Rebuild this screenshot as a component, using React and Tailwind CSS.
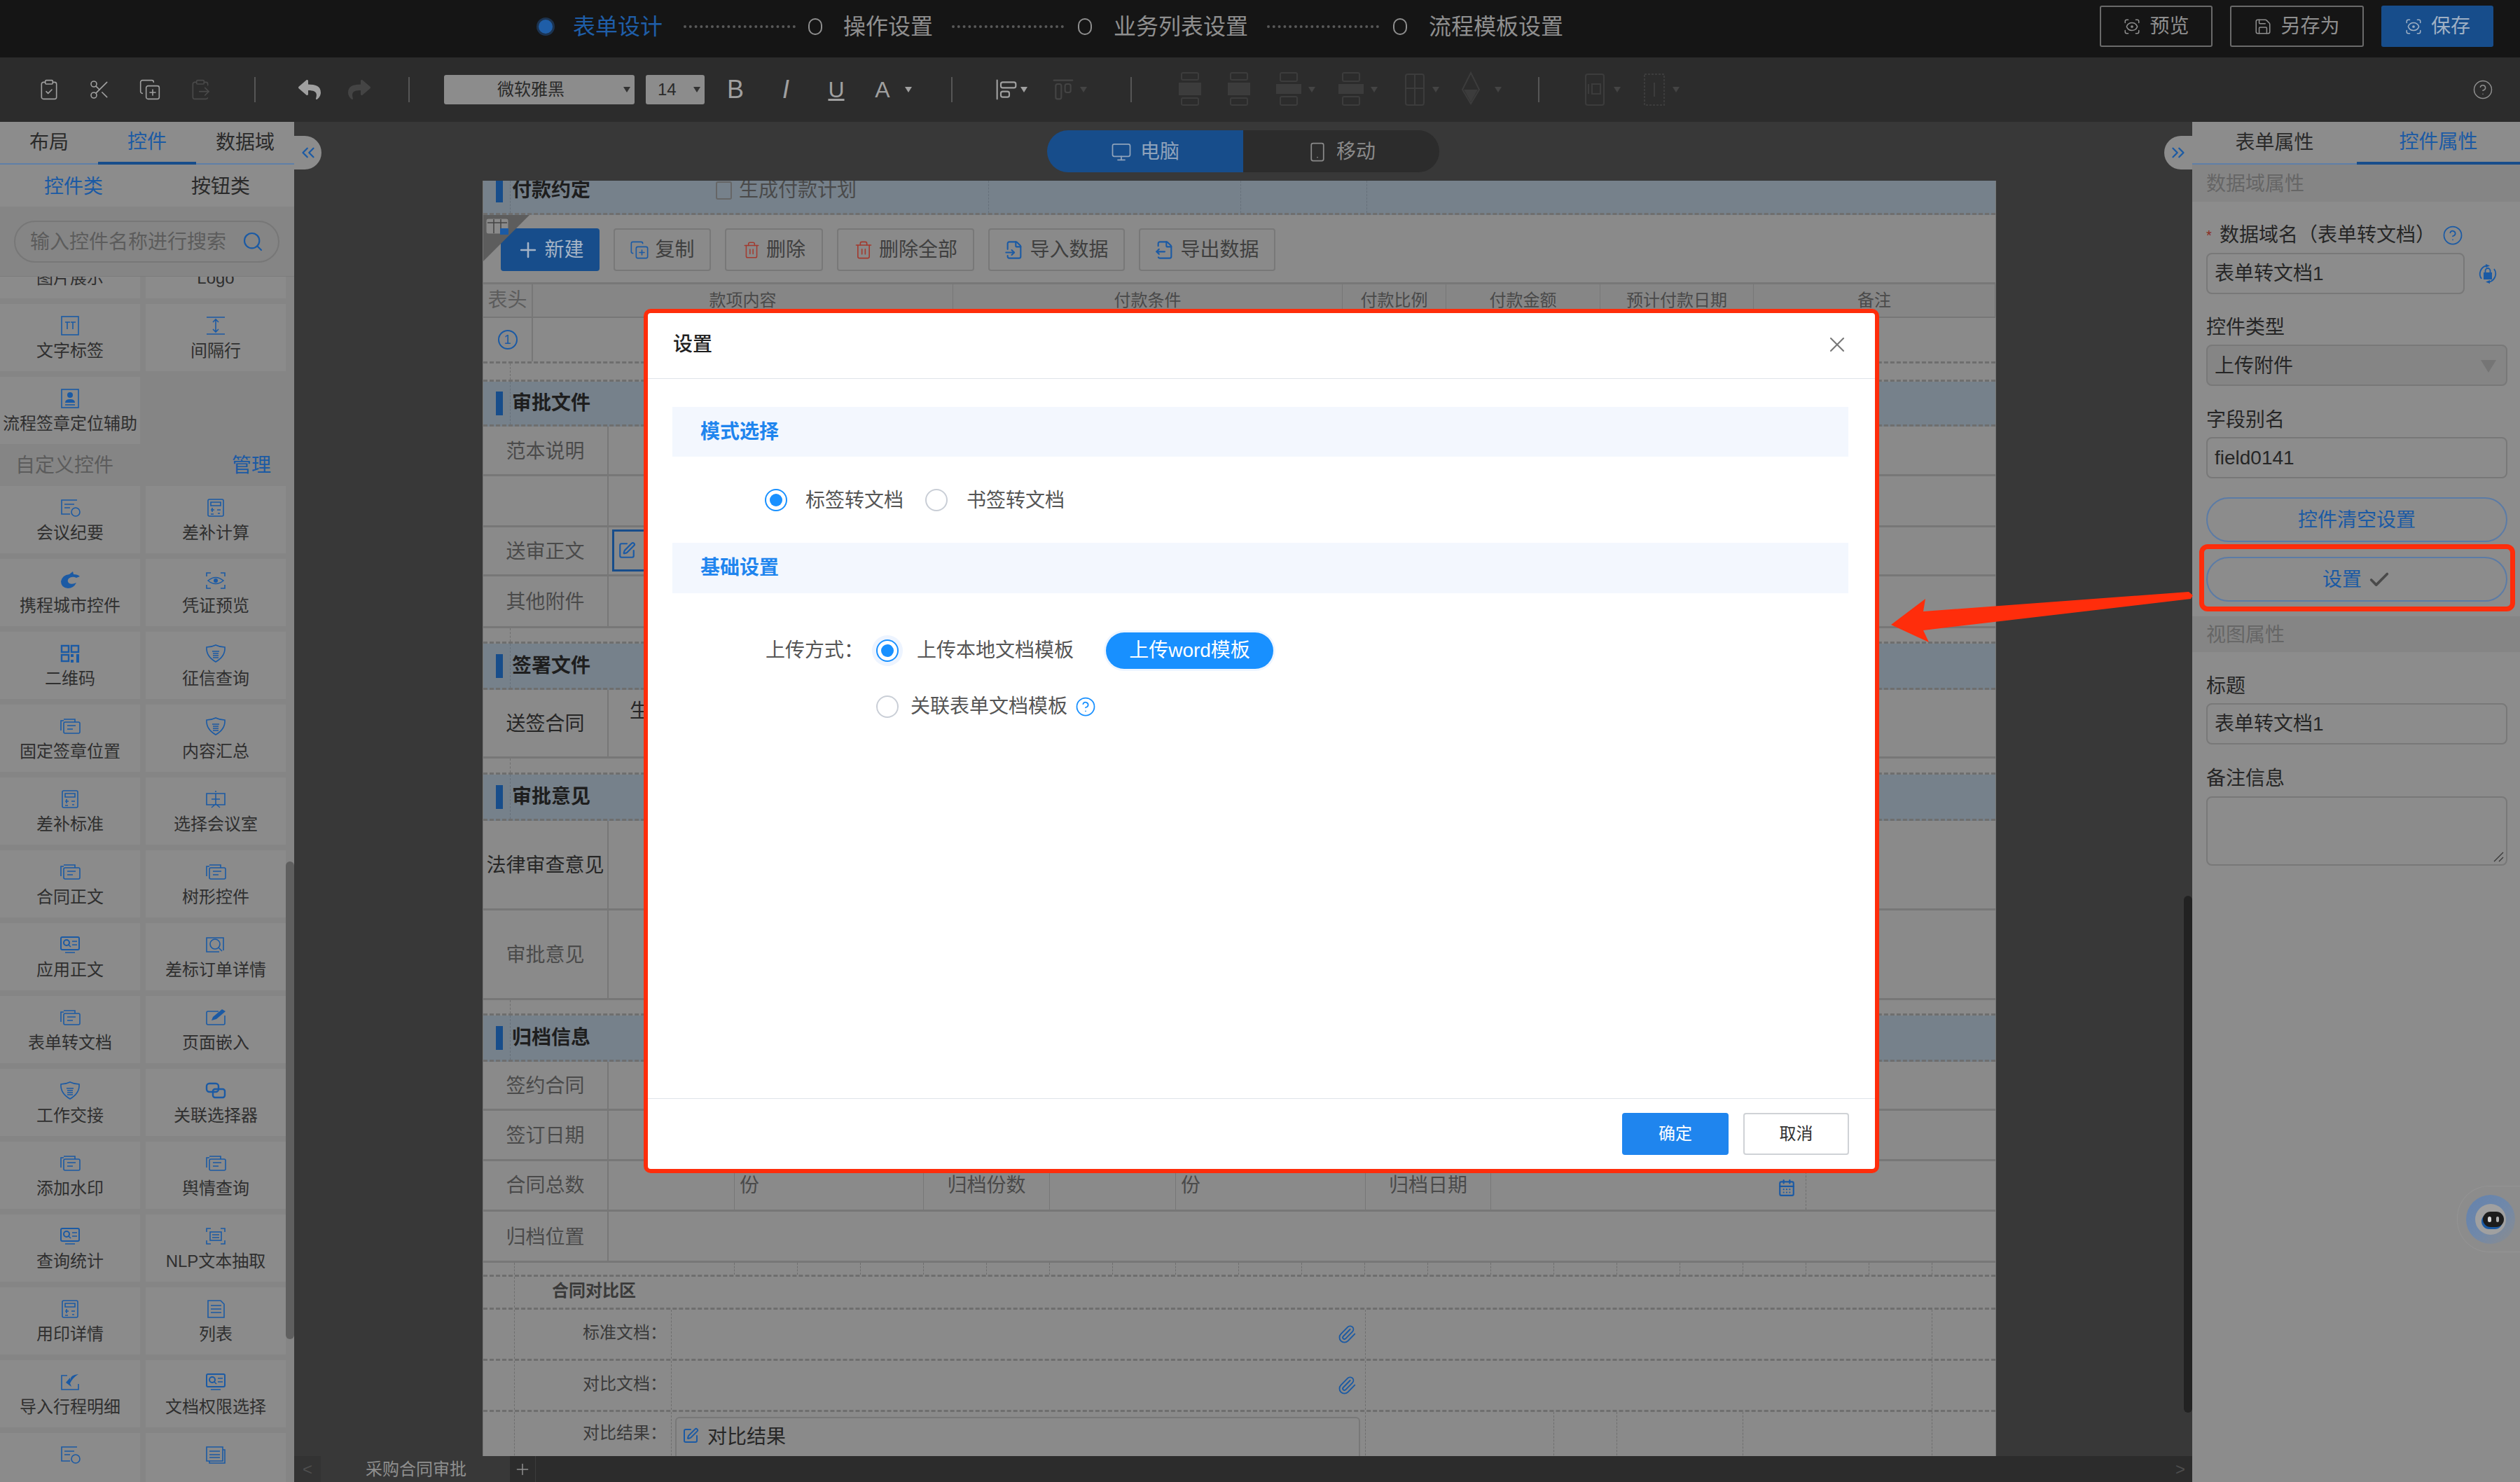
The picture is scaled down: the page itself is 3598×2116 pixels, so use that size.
// App.jsx
import React from "react";
import {
  Check, ChevronsLeft, ChevronsRight, CircleHelp, ClipboardCheck, ClipboardPaste, CopyPlus,
  Monitor, Paperclip, Plus, Scissors, ScanEye, Search, Smartphone, SquarePen, Trash2, X,
  CalendarDays, FileInput, FileOutput, Save, AlignStartVertical, AlignStartHorizontal,
} from "lucide-react";
import { FaReply, FaShare } from "react-icons/fa";

const BLUE = "#1b5aa4";
const DIM = "#3c3c3c";

/* left panel glyphs, all in a 32x28 box */
const WidgetIcon = ({ type }) => {
  const s = { fill: "none", stroke: BLUE, strokeWidth: 1.6 };
  let body = null;
  if (type === "stack") {
    body = (
      <>
        <path d="M3 20V6h4" {...s} />
        <rect x="7" y="8" width="23" height="16" rx="2" {...s} />
        <path d="M7 4h16v4M12 13h12M12 18h8" {...s} />
      </>
    );
  } else if (type === "calc") {
    body = (
      <>
        <rect x="5" y="2" width="22" height="24" rx="2" {...s} />
        <path d="M9 6h14v5H9zM9 17h5M18 17h5M11 14v6M9 23h4M19 22h3" {...s} />
      </>
    );
  } else if (type === "shield") {
    body = (
      <>
        <path d="M3 5q7 0 13-3q6 3 13 3q1 13-13 21Q2 18 3 5z" {...s} />
        <path d="M11 11h10M12 14h8M12 17h8M12 20h8v-0" {...s} strokeWidth="1.3" />
      </>
    );
  } else if (type === "card") {
    body = (
      <>
        <rect x="3" y="3" width="26" height="18" rx="2" {...s} strokeWidth="2" />
        <circle cx="11" cy="11" r="4" {...s} strokeWidth="2" />
        <path d="M14 14l3 3M19 9h7M19 14h7M9 25h14" {...s} />
      </>
    );
  } else if (type === "scan") {
    body = (
      <>
        <path d="M3 8V3h6M23 3h6v5M3 20v5h6M29 20v5h-6" {...s} />
        <path d="M5 14q11-9 22 0q-11 9-22 0z" {...s} />
        <circle cx="16" cy="14" r="3" fill={BLUE} />
      </>
    );
  } else if (type === "ocr") {
    body = (
      <>
        <path d="M3 8V3h6M23 3h6v5M3 20v5h6M29 20v5h-6" {...s} />
        <rect x="8" y="8" width="16" height="12" {...s} />
        <path d="M11 12h10M11 16h10" {...s} />
      </>
    );
  } else if (type === "qr") {
    body = (
      <>
        <rect x="4" y="3" width="10" height="9" {...s} strokeWidth="2.4" />
        <rect x="18" y="3" width="10" height="9" {...s} strokeWidth="2.4" />
        <rect x="4" y="16" width="10" height="9" {...s} strokeWidth="2.4" />
        <path d="M17 15h4v4h-4zM25 15h4v12h-4zM17 23h4v4h-4z" fill={BLUE} />
      </>
    );
  } else if (type === "screen") {
    body = (
      <>
        <path d="M16 2v2M3 6h26v16H3zM16 6v16M10 26l6-5l6 5M10 14h12" {...s} />
      </>
    );
  } else if (type === "find") {
    body = (
      <>
        <path d="M27 22V4H3v20h18" {...s} />
        <circle cx="15" cy="13" r="7" {...s} />
        <path d="M20 18l5 5" {...s} />
      </>
    );
  } else if (type === "edit") {
    body = (
      <>
        <path d="M20 5H5a2 2 0 0 0-2 2v15a2 2 0 0 0 2 2h22a2 2 0 0 0 2-2V11" {...s} />
        <path d="M10 18l2-5L25 2l5 3L17 16z" fill={BLUE} />
      </>
    );
  } else if (type === "link") {
    body = (
      <>
        <rect x="3" y="4" width="17" height="12" rx="4" {...s} strokeWidth="2.4" />
        <rect x="12" y="12" width="17" height="12" rx="3" {...s} strokeWidth="2.4" />
      </>
    );
  } else if (type === "list") {
    body = (
      <>
        <path d="M5 2h18l5 5v19H5z" {...s} />
        <path d="M9 9h15M9 14h15M9 19h15" {...s} />
      </>
    );
  } else if (type === "import") {
    body = (
      <>
        <path d="M12 5H4v20h24v-8" {...s} />
        <path d="M28 3q-12 1-12 9V8l-6 7l8 6l-2-5q4-8 12-13z" fill={BLUE} />
      </>
    );
  } else if (type === "ctrip") {
    body = (
      <path
        d="M3 15q2-9 12-10l5-4l1 4q6 0 9 3l-5 2q-6-3-11 1q-3 4 1 7q4 2 10-1q-4 8-12 8q-10-1-10-10z"
        fill={BLUE}
      />
    );
  } else if (type === "quote") {
    body = (
      <>
        <path d="M26 3H4v20h12M8 9h14M8 14h8" {...s} />
        <circle cx="24" cy="20" r="6" {...s} />
      </>
    );
  } else if (type === "lines") {
    body = (
      <>
        <path d="M3 3h23v20H3zM26 7h3v19H7v-3M7 9h15M7 14h15M7 18h15" {...s} />
      </>
    );
  } else if (type === "text") {
    body = (
      <>
        <rect x="4" y="1" width="24" height="26" {...s} />
        <path d="M9 9h7M12 9v10M17 9h7M20 9v10" {...s} />
      </>
    );
  } else if (type === "gap") {
    body = (
      <>
        <path d="M3 2h26M3 26h26M16 5v18M12 9l4-4l4 4M12 19l4 4l4-4" {...s} />
      </>
    );
  } else if (type === "stamp") {
    body = (
      <>
        <rect x="4" y="1" width="24" height="26" {...s} />
        <circle cx="16" cy="9" r="4" fill={BLUE} />
        <path d="M9 20q0-5 7-5t7 5z" fill={BLUE} />
        <path d="M9 23h14" {...s} />
      </>
    );
  }
  return (
    <svg width="32" height="28" viewBox="0 0 32 28">
      {body}
    </svg>
  );
};

/* greyed-out table tools of the toolbar */
const TableTool = ({ type, className }) => {
  const s = { fill: "none", stroke: DIM, strokeWidth: 2 };
  let body = null;
  if (type === "rowUp" || type === "rowDown") {
    body = (
      <>
        <rect x="8" y="2" width="24" height="10" rx="2" {...s} />
        <rect x="4" y="16" width="32" height="18" fill={DIM} />
        <rect x="8" y="38" width="24" height="10" rx="2" {...s} />
      </>
    );
  } else if (type === "colLeft") {
    body = (
      <>
        <rect x="8" y="2" width="24" height="12" rx="2" {...s} />
        <rect x="2" y="18" width="36" height="14" fill={DIM} />
        <rect x="8" y="36" width="24" height="12" rx="2" {...s} />
      </>
    );
  } else if (type === "grid") {
    body = (
      <>
        <rect x="8" y="4" width="26" height="44" rx="3" {...s} />
        <path d="M21 4v44M8 24h26" {...s} />
      </>
    );
  } else if (type === "fill") {
    body = (
      <>
        <path d="M20 2l12 24l-12 20L8 26z" {...s} />
        <path d="M10 26h20l-10 18z" fill={DIM} />
      </>
    );
  } else if (type === "pageNum") {
    body = (
      <>
        <rect x="6" y="4" width="26" height="44" rx="3" {...s} />
        <rect x="15" y="18" width="12" height="14" {...s} />
        <path d="M10 18v14" {...s} />
      </>
    );
  } else {
    body = (
      <>
        <rect x="6" y="4" width="28" height="44" {...s} strokeDasharray="3 2" />
        <path d="M20 16v20" {...s} />
      </>
    );
  }
  return (
    <svg width="40" height="52" viewBox="0 0 40 52" className={`shrink-0 ${className}`}>
      {body}
    </svg>
  );
};

const LockSync = ({ className }) => (
  <svg width="28" height="28" viewBox="0 0 28 28" className={className}>
    <path d="M5 21A12 12 0 0 1 12 2.4" fill="none" stroke={BLUE} strokeWidth="1.8" />
    <path d="M23 7A12 12 0 0 1 16 25.6" fill="none" stroke={BLUE} strokeWidth="1.8" />
    <path d="M11 0l6 2.5l-6 2.5zM17 23l-6 2.5l6 2.5z" fill={BLUE} />
    <rect x="8" y="12" width="12" height="10" fill={BLUE} />
    <path d="M10.5 12V9.5a3.5 3.5 0 0 1 7 0V12" fill="none" stroke={BLUE} strokeWidth="1.8" />
  </svg>
);

const Cell = ({ icon, label }) => (
  <div className="w-[200px] h-[96px] bg-[#8b8b8b] flex flex-col items-center pt-[17px]">
    <div className="h-[28px] flex items-center">{icon && <WidgetIcon type={icon} />}</div>
    <span className="mt-[5px] text-[24px] leading-[34px] text-[#2f2f2f] whitespace-nowrap">{label}</span>
  </div>
);

const customRows = [
  [["quote", "会议纪要"], ["calc", "差补计算"]],
  [["ctrip", "携程城市控件"], ["scan", "凭证预览"]],
  [["qr", "二维码"], ["shield", "征信查询"]],
  [["stack", "固定签章位置"], ["shield", "内容汇总"]],
  [["calc", "差补标准"], ["screen", "选择会议室"]],
  [["stack", "合同正文"], ["stack", "树形控件"]],
  [["card", "应用正文"], ["find", "差标订单详情"]],
  [["stack", "表单转文档"], ["edit", "页面嵌入"]],
  [["shield", "工作交接"], ["link", "关联选择器"]],
  [["stack", "添加水印"], ["stack", "舆情查询"]],
  [["card", "查询统计"], ["ocr", "NLP文本抽取"]],
  [["calc", "用印详情"], ["list", "列表"]],
  [["import", "导入行程明细"], ["card", "文档权限选择"]],
  [["quote", ""], ["lines", ""]],
];

const LeftPanel = () => (
  <aside className="w-[420px] h-full bg-[#858585] flex flex-col shrink-0 relative overflow-hidden">
    <div className="h-[61px] bg-[#8c8c8c] flex border-b-2 border-[#5f7fa8] text-[28px]">
      <div className="w-[140px] flex items-center justify-center text-[#2a2a2a]">布局</div>
      <div className="w-[140px] flex items-center justify-center text-[#1b5aa4] border-b-[4px] border-[#174d8b] -mb-[2px]">控件</div>
      <div className="w-[140px] flex items-center justify-center text-[#2a2a2a]">数据域</div>
    </div>
    <div className="h-[60px] bg-[#8c8c8c] flex text-[28px] pt-[4px]">
      <div className="w-[210px] flex items-center justify-center text-[#1b5aa4]">控件类</div>
      <div className="w-[210px] flex items-center justify-center text-[#2a2a2a]">按钮类</div>
    </div>
    <div className="h-[100px] bg-[#858585] border-b border-[#7c7c7c] px-[20px] pt-[20px] relative z-10">
      <div className="w-[379px] h-[60px] rounded-full border-2 border-[#777777] flex items-center justify-between pl-[21px] pr-[20px]">
        <span className="pt-[2px] text-[28px] text-[#5c5c5c] whitespace-nowrap">输入控件名称进行搜索</span>
        <Search size={32} color={BLUE} strokeWidth={1.6} />
      </div>
    </div>
    <div className="flex-1 overflow-hidden">
      <div className="-mt-[65px]">
        <div className="flex gap-[8px]">
          <Cell label="图片展示" />
          <Cell label="Logo" />
        </div>
        <div className="flex gap-[8px] mt-[8px]">
          <Cell icon="text" label="文字标签" />
          <Cell icon="gap" label="间隔行" />
        </div>
        <div className="flex gap-[8px] mt-[8px]">
          <Cell icon="stamp" label="流程签章定位辅助" />
        </div>
        <div className="h-[60px] flex items-center justify-between pl-[22px] pr-[33px] pt-[2px] text-[28px]">
          <span className="text-[#5c5c5c]">自定义控件</span>
          <span className="text-[#1b5aa4]">管理</span>
        </div>
        {customRows.map((row, i) => (
          <div key={i} className="flex gap-[8px] mb-[8px]">
            <Cell icon={row[0][0]} label={row[0][1]} />
            <Cell icon={row[1][0]} label={row[1][1]} />
          </div>
        ))}
      </div>
    </div>
    <div className="absolute left-[408px] top-[1056px] w-[12px] h-[682px] rounded-full bg-[#5f5f5f]" />
  </aside>
);

const Label = ({ children }) => <div className="h-[40px] pt-[3px] flex items-center text-[28px] text-[#262626]">{children}</div>;

const inputCls = "h-[59px] rounded-[8px] border-2 border-[#787878] flex items-center pl-[10px] text-[28px] text-[#262626]";

const RightPanel = () => (
  <aside className="w-[468px] h-full bg-[#8c8c8c] flex flex-col shrink-0">
    <div className="h-[61px] flex border-b-2 border-[#5f7fa8] text-[28px]">
      <div className="w-[235px] flex items-center justify-center text-[#2a2a2a]">表单属性</div>
      <div className="w-[233px] flex items-center justify-center text-[#1b5aa4] border-b-[4px] border-[#174d8b] -mb-[2px]">控件属性</div>
    </div>
    <div className="h-[53px] bg-[#858585] flex items-center pl-[20px] pt-[2px] text-[28px] text-[#666666]">数据域属性</div>
    <div className="px-[20px] pr-[18px]">
      <div className="mt-[26px] h-[40px] pt-[3px] flex items-center text-[28px] text-[#262626]">
        <span className="w-[19px] text-[#8a2a20] text-[20px]">*</span>
        <span className="whitespace-nowrap">数据域名（表单转文档）</span>
        <CircleHelp size={30} color={BLUE} strokeWidth={1.4} className="ml-[10px]" />
      </div>
      <div className="mt-[7px] flex items-center">
        <div className={`${inputCls} w-[369px]`}>表单转文档1</div>
        <LockSync className="ml-[19px]" />
      </div>
      <div className="mt-[26px]"><Label>控件类型</Label></div>
      <div className={`${inputCls} mt-[6px] pt-[3px] bg-[#858585] justify-between pr-[14px]`}>
        <span>上传附件</span>
        <span className="w-0 h-0 border-x-[11px] border-x-transparent border-t-[18px] border-t-[#757575]" />
      </div>
      <div className="mt-[27px]"><Label>字段别名</Label></div>
      <div className={`${inputCls} mt-[6px]`}>field0141</div>
      <div className="mt-[27px] h-[64px] pt-[2px] rounded-full border-2 border-[#5b7ba6] flex items-center justify-center text-[28px] text-[#1b5aa4]">控件清空设置</div>
      <div className="mt-[21px] h-[64px] pt-[2px] rounded-full border-2 border-[#5b7ba6] flex items-center justify-center gap-[8px] text-[28px] text-[#1b5aa4]">
        设置<Check size={34} color="#4a4a4a" strokeWidth={2.6} />
      </div>
    </div>
    <div className="mt-[21px] h-[51px] bg-[#858585] flex items-center pl-[20px] pt-[2px] text-[28px] text-[#666666]">视图属性</div>
    <div className="px-[20px] pr-[18px]">
      <div className="mt-[27px]"><Label>标题</Label></div>
      <div className={`${inputCls} mt-[6px]`}>表单转文档1</div>
      <div className="mt-[27px]"><Label>备注信息</Label></div>
      <div className="mt-[7px] h-[99px] rounded-[8px] border-2 border-[#787878] flex items-end justify-end p-[3px]">
        <svg width="16" height="16" viewBox="0 0 16 16">
          <path d="M2 15L15 2M9 15l6-6" stroke="#3a3a3a" strokeWidth="1.4" fill="none" />
        </svg>
      </div>
    </div>
  </aside>
);

const Band = ({ title, className, shiftCls = "", extra }) => (
  <div className={`flex overflow-hidden bg-[#76818b] border-b-[3px] border-dashed border-[#6e6e6e] ${className}`}>
    <div className="w-[39px] flex items-center pl-[18px] border-r border-dashed border-[#66707a]">
      <span className={`w-[10px] h-[34px] bg-[#174d8b] ${shiftCls}`} />
    </div>
    <span className={`ml-[2px] self-center leading-[28px] text-[28px] font-bold text-[#1e1e1e] whitespace-nowrap ${shiftCls}`}>{title}</span>
    {extra}
  </div>
);

const Gap = ({ className }) => (
  <div className={`flex bg-[#8a8a8a] border-b-[3px] border-dashed border-[#6e6e6e] ${className}`}>
    <div className="w-[39px] border-r border-dashed border-[#6e6e6e]" />
  </div>
);

const FieldRow = ({ label, className, children, dark }) => (
  <div className={`flex border-b-[3px] border-[#777777] ${className}`}>
    <div className={`w-[179px] pt-[3px] border-r-[2px] border-[#777777] flex items-center justify-center text-[28px] whitespace-nowrap ${dark ? "text-[#262626]" : "text-[#4a4a4a]"}`}>
      {label}
    </div>
    <div className="flex-1 min-w-0">{children}</div>
  </div>
);

const ToolBtn = ({ icon, label, className }) => (
  <div className={`h-[61px] rounded-[4px] border-2 border-[#787878] flex items-center justify-center gap-[8px] text-[28px] text-[#3f3f3f] whitespace-nowrap ${className}`}>
    {icon}
    {label}
  </div>
);

const headCells = ["款项内容", "付款条件", "付款比例", "付款金额", "预计付款日期", "备注"];

const FormSheet = () => (
  <div className="ml-[269px] w-[2161px] h-[1821px] bg-[#8a8a8a] border-x border-[#777777] overflow-hidden">
    <Band
      title="付款约定"
      className="h-[49px]"
      shiftCls="-translate-y-[9px]"
      extra={
        <>
          <div className="ml-[179px] h-[46px] flex items-center -translate-y-[9px]">
            <span className="w-[23px] h-[26px] rounded-[3px] border-2 border-[#666666]" />
            <span className="ml-[10px] leading-[28px] text-[28px] text-[#4a4a4a] whitespace-nowrap">生成付款计划</span>
          </div>
          <span className="ml-[188px] border-r border-dashed border-[#66707a]" />
          <span className="ml-[359px] border-r border-dashed border-[#66707a]" />
          <span className="ml-[179px] border-r border-dashed border-[#66707a]" />
        </>
      }
    />
    <div className="h-[99px] relative flex items-start gap-[20px] pl-[25px] pt-[19px] border-b-[3px] border-[#777777]">
      <svg className="absolute left-[0px] top-[0px]" width="66" height="66" viewBox="0 0 66 66">
        <path d="M0 0H66L0 66z" fill="#5d5d5d" />
        <rect x="4" y="5" width="32" height="22" rx="3" fill="#8a8a8a" stroke="#5d5d5d" />
        <path d="M6 11h28M15 6v20M25 6v20" stroke="#444444" strokeWidth="1.5" />
        <rect x="24" y="19" width="12" height="9" fill={BLUE} />
      </svg>
      <div className="w-[141px] h-[61px] bg-[#174d8b] rounded-[4px] flex items-center justify-center gap-[6px] text-[28px] text-[#a5b4c6]">
        <Plus size={34} strokeWidth={1.8} />新建
      </div>
      <ToolBtn className="w-[139px]" icon={<CopyPlus size={28} color={BLUE} strokeWidth={1.4} />} label="复制" />
      <ToolBtn className="w-[140px]" icon={<Trash2 size={26} color="#a23a2f" strokeWidth={1.4} />} label="删除" />
      <ToolBtn className="w-[196px]" icon={<Trash2 size={28} color="#a23a2f" strokeWidth={1.4} />} label="删除全部" />
      <ToolBtn className="w-[195px]" icon={<FileInput size={28} color={BLUE} strokeWidth={1.8} />} label="导入数据" />
      <ToolBtn className="w-[195px]" icon={<FileOutput size={28} color={BLUE} strokeWidth={1.8} />} label="导出数据" />
    </div>
    <div className="h-[48px] grid grid-cols-[71px_600px_556px_148px_220px_219px_1fr] bg-[#868686] border-b-[2px] border-[#777777] text-[24px] text-[#4a4a4a]">
      <div className="border-r-[2px] border-[#777777] flex items-center justify-center text-[28px] text-[#5c5c5c]">表头</div>
      {headCells.map((c) => (
        <div key={c} className="border-r border-[#777777] flex items-center justify-center whitespace-nowrap">{c}</div>
      ))}
    </div>
    <div className="h-[65px] flex border-b-[3px] border-dashed border-[#6e6e6e]">
      <div className="w-[71px] border-r-[2px] border-[#777777] flex items-center justify-center">
        <span className="w-[28px] h-[28px] rounded-full border-2 border-[#1b5aa4] text-[18px] leading-none text-[#1b5aa4] flex items-center justify-center">1</span>
      </div>
    </div>
    <Gap className="h-[26px]" />
    <Band title="审批文件" className="h-[64px]" />
    <FieldRow label="范本说明" className="h-[71px]" />
    <FieldRow label="" className="h-[73px]" />
    <FieldRow label="送审正文" className="h-[70px]">
      <div className="ml-[5px] mt-[3px] w-[300px] h-[60px] border-[3px] border-[#174d8b] flex items-center pl-[5px]">
        <SquarePen size={26} color={BLUE} />
      </div>
    </FieldRow>
    <FieldRow label="其他附件" className="h-[74px]" />
    <Gap className="h-[22px]" />
    <Band title="签署文件" className="h-[66px]" />
    <FieldRow label="送签合同" dark className="h-[98px]">
      <div className="pl-[30px] pt-[10px] text-[28px] text-[#262626]">生成合同</div>
    </FieldRow>
    <Gap className="h-[23px]" />
    <Band title="审批意见" className="h-[66px]" />
    <FieldRow label="法律审查意见" dark className="h-[128px]" />
    <FieldRow label="审批意见" className="h-[128px]" />
    <Gap className="h-[22px]" />
    <Band title="归档信息" className="h-[66px]" />
    <FieldRow label="签约合同" className="h-[70px]" />
    <FieldRow label="签订日期" className="h-[72px]" />
    <div className="h-[72px] grid grid-cols-[179px_180px_270px_180px_180px_271px_179px_450px_1fr] border-b-[3px] border-[#777777] text-[28px] text-[#4a4a4a]">
      <div className="border-r-[2px] border-[#777777] flex items-center justify-center">合同总数</div>
      <div className="border-r border-[#777777]" />
      <div className="border-r border-[#777777] flex items-center pl-[7px]">份</div>
      <div className="border-r border-[#777777] flex items-center justify-center">归档份数</div>
      <div className="border-r border-[#777777]" />
      <div className="border-r border-[#777777] flex items-center pl-[7px]">份</div>
      <div className="border-r border-[#777777] flex items-center justify-center">归档日期</div>
      <div className="border-r border-dashed border-[#6e6e6e] flex items-center justify-end pr-[14px] pt-[6px]">
        <CalendarDays size={26} color={BLUE} strokeWidth={2} />
      </div>
      <div />
    </div>
    <FieldRow label="归档位置" className="h-[73px]" />
    <div className="h-[20px] flex border-b-[3px] border-dashed border-[#6e6e6e]">
      <div className="w-[45px] border-r border-dashed border-[#6e6e6e]" />
      <div className="w-[314px] border-r border-dashed border-[#6e6e6e]" />
      {Array.from({ length: 19 }).map((_, i) => (
        <div key={i} className="w-[90px] border-r border-dashed border-[#6e6e6e]" />
      ))}
    </div>
    <div className="h-[47px] flex border-b-[3px] border-dashed border-[#6e6e6e]">
      <div className="w-[45px] border-r border-dashed border-[#6e6e6e]" />
      <span className="ml-[53px] self-center -translate-y-[2px] text-[24px] font-bold text-[#3a3a3a]">合同对比区</span>
    </div>
    {["标准文档：", "对比文档："].map((t) => (
      <div key={t} className="h-[73px] grid grid-cols-[45px_224px_991px_809px_92px] border-b-[3px] border-dashed border-[#6e6e6e]">
        <div className="border-r border-dashed border-[#6e6e6e]" />
        <div className="border-r border-dashed border-[#6e6e6e] flex items-center justify-end pr-[6px] pb-[4px] text-[24px] text-[#3a3a3a]">{t}</div>
        <div className="border-r border-dashed border-[#6e6e6e] flex items-center justify-end pr-[12px]">
          <Paperclip size={28} color={BLUE} strokeWidth={1.6} />
        </div>
        <div className="border-r border-dashed border-[#6e6e6e]" />
        <div />
      </div>
    ))}
    <div className="h-[64px] grid grid-cols-[45px_224px_991px_269px_90px_180px_270px_92px]">
      <div className="border-r border-dashed border-[#6e6e6e]" />
      <div className="border-r border-dashed border-[#6e6e6e] text-right pt-[12px] pr-[6px] text-[24px] text-[#3a3a3a]">对比结果：</div>
      <div className="border-r border-dashed border-[#6e6e6e] pt-[7px] pl-[5px] pr-[7px]">
        <div className="h-[70px] rounded-[6px] border-2 border-[#787878] flex items-start pt-[6px] pl-[8px] gap-[12px] text-[28px] text-[#262626]">
          <SquarePen size={24} color={BLUE} className="mt-[7px]" />对比结果
        </div>
      </div>
      <div className="border-r border-dashed border-[#6e6e6e]" />
      <div className="border-r border-dashed border-[#6e6e6e]" />
      <div className="border-r border-dashed border-[#6e6e6e]" />
      <div className="border-r border-dashed border-[#6e6e6e]" />
      <div />
    </div>
  </div>
);

const Radio = ({ on, halo }) => (
  <span
    className={`w-[32px] h-[32px] rounded-full border-2 flex items-center justify-center shrink-0 bg-white ${on ? "border-[#1890ff]" : "border-[#c9ced6]"} ${halo ? "ring-[6px] ring-[#edf4ff]" : ""}`}
  >
    {on && <span className="w-[18px] h-[18px] rounded-full bg-[#1890ff]" />}
  </span>
);

const SettingsModal = () => (
  <div className="absolute left-[919px] top-[441px] w-[1764px] h-[1234px] bg-white border-[6px] border-[#ff2d0b] rounded-[10px] flex flex-col z-30">
    <div className="h-[94px] border-b border-[#dfe3ea] flex items-center justify-between pl-[36px] pr-[36px] pb-[4px]">
      <span className="text-[28px] font-medium text-[#1f1f1f]">设置</span>
      <X size={36} color="#777777" strokeWidth={1.4} />
    </div>
    <div className="flex-1 px-[35px] pr-[38px] pt-[40px] text-[28px] text-[#555555]">
      <div className="h-[71px] bg-[#f3f7fe] flex items-center pl-[40px] font-bold text-[#1f85ee]">模式选择</div>
      <div className="h-[123px] flex items-center pl-[132px]">
        <Radio on />
        <span className="ml-[26px] pt-[2px]">标签转文档</span>
        <span className="ml-[31px]"><Radio /></span>
        <span className="ml-[27px] pt-[2px]">书签转文档</span>
      </div>
      <div className="h-[72px] bg-[#f3f7fe] flex items-center pl-[40px] font-bold text-[#1f85ee]">基础设置</div>
      <div className="mt-[55px] h-[52px] flex items-center pl-[133px] pt-[2px]">
        <span className="w-[158px] whitespace-nowrap">上传方式：</span>
        <Radio on halo />
        <span className="ml-[26px] whitespace-nowrap">上传本地文档模板</span>
        <span className="ml-[46px] w-[239px] h-[52px] rounded-full bg-[#1890ff] ring-[3px] ring-[#eef5ff] text-white flex items-center justify-center whitespace-nowrap">上传word模板</span>
      </div>
      <div className="mt-[29px] h-[52px] flex items-center pl-[291px]">
        <Radio />
        <span className="ml-[17px] whitespace-nowrap">关联表单文档模板</span>
        <CircleHelp size={30} color="#1890ff" strokeWidth={1.4} className="ml-[11px]" />
      </div>
    </div>
    <div className="h-[101px] border-t border-[#dfe3ea] flex items-center justify-end gap-[21px] pr-[37px] text-[24px]">
      <div className="w-[152px] h-[60px] bg-[#1f85ee] rounded-[4px] text-white flex items-center justify-center">确定</div>
      <div className="w-[151px] h-[60px] border-2 border-[#cfd2d6] rounded-[4px] text-[#333333] flex items-center justify-center">取消</div>
    </div>
  </div>
);

const Step = ({ label, ringCls, textCls }) => (
  <>
    <span className={`w-[20px] h-[24px] rounded-full border-2 border-[#8f8f8f] shrink-0 ${ringCls}`} />
    <span className={`text-[32px] text-[#8f8f8f] whitespace-nowrap ${textCls}`}>{label}</span>
  </>
);

const Dots = ({ className }) => <span className={`w-[160px] border-t-[4px] border-dotted border-[#585858] shrink-0 ${className}`} />;

const Sep = ({ className }) => <span className={`w-[2px] h-[36px] bg-[#565656] shrink-0 ${className}`} />;
const Caret = ({ className, dim }) => (
  <span className={`w-0 h-0 border-x-[5px] border-x-transparent border-t-[8px] shrink-0 ${dim ? "border-t-[#444444]" : "border-t-[#a0a0a0]"} ${className}`} />
);

const TopBar = () => (
  <div className="h-[82px] bg-[#151515] flex items-center pl-[769px] pr-[38px] pb-[7px] shrink-0">
    <span className="w-[20px] h-[20px] rounded-full bg-[#1f5ea8] ring-[3px] ring-[#1c3350] shrink-0" />
    <span className="ml-[29px] text-[32px] text-[#1f5ea8] whitespace-nowrap">表单设计</span>
    <Dots className="ml-[30px]" />
    <Step label="操作设置" ringCls="ml-[18px]" textCls="ml-[30px]" />
    <Dots className="ml-[27px]" />
    <Step label="业务列表设置" ringCls="ml-[20px]" textCls="ml-[31px]" />
    <Dots className="ml-[27px]" />
    <Step label="流程模板设置" ringCls="ml-[20px]" textCls="ml-[31px]" />
    <div className="ml-auto flex gap-[25px] text-[28px]">
      <div className="w-[161px] h-[59px] rounded-[3px] border-2 border-[#6a6a6a] flex items-center justify-center gap-[12px] text-[#8f8f8f]">
        <ScanEye size={26} strokeWidth={1.4} />预览
      </div>
      <div className="w-[191px] h-[59px] rounded-[3px] border-2 border-[#6a6a6a] flex items-center justify-center gap-[12px] text-[#8f8f8f]">
        <Save size={26} strokeWidth={1.4} />另存为
      </div>
      <div className="w-[160px] h-[59px] rounded-[3px] bg-[#174d8b] flex items-center justify-center gap-[12px] text-[#9fb0c4]">
        <ScanEye size={26} strokeWidth={1.4} />保存
      </div>
    </div>
  </div>
);

const ToolBar = () => (
  <div className="h-[92px] bg-[#2c2c2c] flex items-center pl-[54px] pr-[38px] shrink-0 text-[#a0a0a0]">
    <div className="flex gap-[40px]">
      <ClipboardCheck size={32} strokeWidth={1.2} />
      <Scissors size={32} strokeWidth={1.2} />
      <CopyPlus size={32} strokeWidth={1.2} />
      <ClipboardPaste size={32} strokeWidth={1.2} color="#4a4a4a" />
    </div>
    <Sep className="ml-[61px]" />
    <FaReply size={32} className="ml-[61px]" />
    <FaShare size={32} color="#444444" className="ml-[39px]" />
    <Sep className="ml-[54px]" />
    <div className="ml-[49px] w-[272px] h-[42px] rounded-[3px] bg-[#8c8c8c] text-[#2a2a2a] text-[24px] flex items-center justify-center pr-[24px] relative">
      微软雅黑
      <span className="absolute right-[6px] w-0 h-0 border-x-[5px] border-x-transparent border-t-[8px] border-t-[#333333]" />
    </div>
    <div className="ml-[16px] w-[84px] h-[42px] rounded-[3px] bg-[#8c8c8c] text-[#2a2a2a] text-[24px] flex items-center pl-[17px] relative">
      14
      <span className="absolute right-[6px] w-0 h-0 border-x-[5px] border-x-transparent border-t-[8px] border-t-[#333333]" />
    </div>
    <span className="ml-[28px] w-[32px] text-center text-[36px]">B</span>
    <span className="ml-[40px] w-[32px] text-center text-[36px] italic">I</span>
    <span className="ml-[40px] w-[32px] text-center text-[32px] underline">U</span>
    <span className="ml-[34px] w-[32px] text-center text-[32px]">A</span>
    <Caret className="ml-[16px]" />
    <Sep className="ml-[56px]" />
    <AlignStartVertical size={32} strokeWidth={1.6} className="ml-[61px]" />
    <Caret className="ml-[4px]" />
    <AlignStartHorizontal size={32} strokeWidth={1.6} color="#444444" className="ml-[35px]" />
    <Caret className="ml-[8px]" dim />
    <Sep className="ml-[62px]" />
    <TableTool type="rowUp" className="ml-[63px]" />
    <TableTool type="rowDown" className="ml-[30px]" />
    <TableTool type="colLeft" className="ml-[31px]" />
    <Caret className="ml-[8px]" dim />
    <TableTool type="colLeft" className="ml-[31px]" />
    <Caret className="ml-[8px]" dim />
    <TableTool type="grid" className="ml-[32px]" />
    <Caret className="ml-[6px]" dim />
    <TableTool type="fill" className="ml-[25px]" />
    <Caret className="ml-[14px]" dim />
    <Sep className="ml-[52px]" />
    <TableTool type="pageNum" className="ml-[60px]" />
    <Caret className="ml-[6px]" dim />
    <TableTool type="pageOne" className="ml-[28px]" />
    <Caret className="ml-[6px]" dim />
    <CircleHelp size={30} strokeWidth={1.2} color="#8f8f8f" className="ml-auto" />
  </div>
);

const Canvas = () => (
  <main className="flex-1 min-w-0 h-full bg-[#383838] flex flex-col relative">
    <div className="h-[84px] flex justify-center pt-[12px] shrink-0">
      <div className="w-[280px] h-[60px] rounded-l-full bg-[#174d8b] flex items-center justify-center gap-[12px] pt-[2px] text-[28px] text-[#8fa3bb]">
        <Monitor size={30} strokeWidth={1.4} />电脑
      </div>
      <div className="w-[280px] h-[60px] rounded-r-full bg-[#2c2c2c] flex items-center justify-center gap-[12px] pt-[2px] text-[28px] text-[#8a8a8a]">
        <Smartphone size={30} strokeWidth={1.4} />移动
      </div>
    </div>
    <div className="flex-1 min-h-0">
      <FormSheet />
    </div>
    <div className="h-[37px] bg-[#2c2c2c] flex shrink-0 text-[#8f8f8f] text-[24px]">
      <div className="w-[38px] bg-[#333333] flex items-center justify-center text-[#4e4e4e]">&lt;</div>
      <div className="w-[270px] bg-[#383838] flex items-center pl-[64px] whitespace-nowrap">采购合同审批</div>
      <div className="w-[37px] border-r border-[#3c3c3c] flex items-center justify-center">
        <Plus size={26} strokeWidth={1.4} />
      </div>
      <div className="ml-auto w-[24px] flex items-center text-[#4e4e4e]">&gt;</div>
    </div>
    {/* collapse handles and page scrollbar */}
    <div className="absolute left-0 top-[20px] w-[39px] h-[48px] rounded-r-full bg-[#8c8c8c] flex items-center justify-center">
      <ChevronsLeft size={30} color={BLUE} strokeWidth={1.8} />
    </div>
    <div className="absolute right-0 top-[20px] w-[40px] h-[48px] rounded-l-full bg-[#8c8c8c] flex items-center justify-center">
      <ChevronsRight size={30} color={BLUE} strokeWidth={1.8} />
    </div>
    <div className="absolute right-0 top-[1105px] w-[12px] h-[738px] rounded-full bg-[#222222]" />
  </main>
);

export default function App() {
  return (
    <div className="relative w-[3598px] h-[2116px] overflow-hidden flex flex-col bg-[#383838] font-['Liberation_Sans','Noto_Sans_CJK_SC',sans-serif]">
      <TopBar />
      <ToolBar />
      <div className="flex-1 min-h-0 flex">
        <LeftPanel />
        <Canvas />
        <RightPanel />
      </div>

      <SettingsModal />

      {/* red annotation */}
      <div className="absolute left-[3140px] top-[777px] w-[451px] h-[96px] border-[7px] border-[#ff2d0b] rounded-[12px] z-40" />
      <svg className="absolute left-[2690px] top-[835px] z-40" width="450" height="90" viewBox="0 0 450 90">
        <polygon points="10,57 59,20 56,38 435,10 441,15 438,20 56,65 64,82" fill="#ff2d0b" />
      </svg>

      {/* assistant eye */}
      <div className="absolute right-0 top-[1693px] w-[90px] h-[95px] rounded-l-[46px] border border-[#949494] border-r-0 flex items-center pl-[12px] z-20">
        <div className="w-[70px] h-[70px] rounded-full bg-linear-to-br from-[#6482ad] via-[#6f88aa] to-[#8c8c8c] flex items-center justify-center shrink-0">
          <div className="w-[44px] h-[44px] rounded-full bg-[#a0a0a0] flex items-center shrink-0">
            <div className="ml-[11px] w-[30px] h-[22px] shrink-0 rounded-full bg-[#1c1c1c] shadow-[-2px_3px_0_#1b5aa4] flex items-center justify-center gap-[7px]">
              <span className="w-[5px] h-[8px] rounded-full bg-[#d8d8d8]" />
              <span className="w-[4px] h-[8px] rounded-full bg-[#b0b0b0]" />
            </div>
          </div>
        </div>
      </div>
    </div>
  );
}
